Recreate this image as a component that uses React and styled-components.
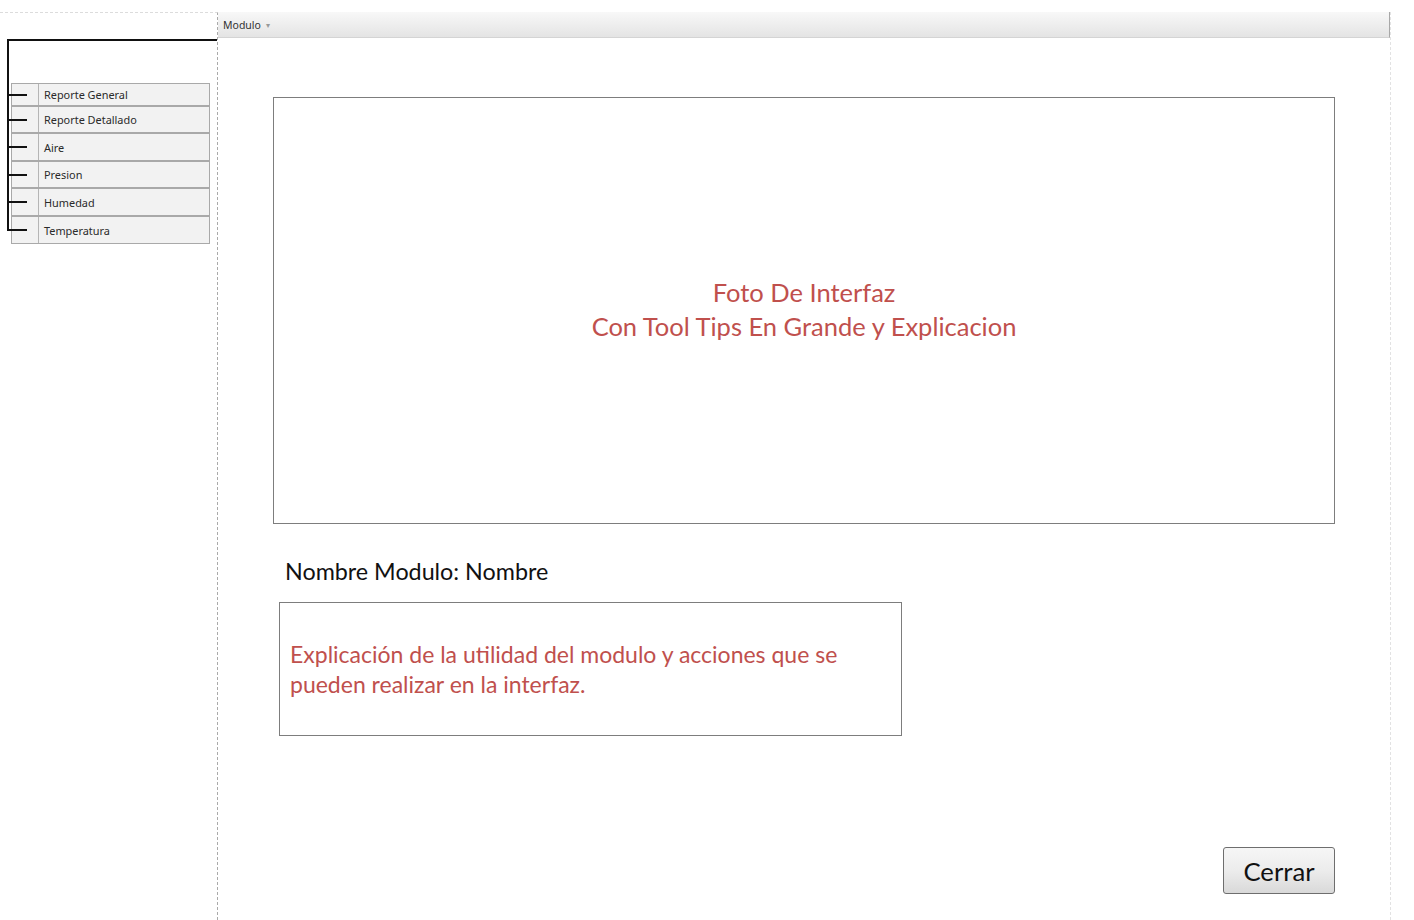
import React from "react";
import styled, { createGlobalStyle } from "styled-components";

const items = [
  { label: "Reporte General", h: 23 },
  { label: "Reporte Detallado", h: 27 },
  { label: "Aire", h: 28 },
  { label: "Presion", h: 27 },
  { label: "Humedad", h: 28 },
  { label: "Temperatura", h: 28 },
];

export default function App() {
  return (
    <>
      <GlobalStyle />
      <Frame>
        <Sidebar>
          <Tree>
            <TreeList>
              {items.map((item) => (
                <TreeRow key={item.label} h={item.h}>
                  <RowIcon />
                  <RowLabel>{item.label}</RowLabel>
                </TreeRow>
              ))}
            </TreeList>
          </Tree>
        </Sidebar>
        <Main>
          <MenuBar>
            <MenuItem>
              Modulo <Caret>▾</Caret>
            </MenuItem>
          </MenuBar>
          <Body>
            <PhotoBox>
              <RedText size={25.5} lh={34}>
                Foto De Interfaz
                <br />
                Con Tool Tips En Grande y Explicacion
              </RedText>
            </PhotoBox>
            <NameLabel>Nombre Modulo: Nombre</NameLabel>
            <DescBox>
              <RedText size={23} lh={30} align="left">
                Explicación de la utilidad del modulo y acciones que se
                <br />
                pueden realizar en la interfaz.
              </RedText>
            </DescBox>
            <CloseButton>Cerrar</CloseButton>
          </Body>
        </Main>
      </Frame>
    </>
  );
}

const GlobalStyle = createGlobalStyle`
  html, body {
    margin: 0;
    padding: 0;
    background: #ffffff;
    font-family: "Lato", "Noto Sans", sans-serif;
  }
`;

const Frame = styled.div`
  display: grid;
  grid-template-columns: 218px 1173px;
  margin-top: 12px;
  min-height: 908px;
`;

const Sidebar = styled.div`
  border-top: 1px dashed #dcdcdc;
  border-right: 1px dashed #aaaaaa;
  box-sizing: border-box;
  padding-top: 26px;
`;

const Tree = styled.div`
  position: relative;
  margin-left: 7px;
  border-top: 2px solid #111;
  padding-top: 42px;
  &::before {
    content: "";
    position: absolute;
    left: 0;
    top: 0;
    bottom: 13px;
    width: 2px;
    background: #111;
  }
`;

const TreeList = styled.div`
  display: flex;
  flex-direction: column;
  margin-left: 4px;
  width: 199px;
`;

const TreeRow = styled.div`
  position: relative;
  display: flex;
  height: ${(p) => p.h}px;
  box-sizing: border-box;
  border: 1px solid #a9a9a9;
  background: #f2f2f2;
  &::before {
    content: "";
    position: absolute;
    left: -4px;
    top: 50%;
    width: 19px;
    height: 2px;
    margin-top: -1px;
    background: #111;
  }
`;

const RowIcon = styled.div`
  width: 26px;
  border-right: 1px solid #b5b5b5;
`;

const RowLabel = styled.div`
  display: flex;
  align-items: center;
  padding-left: 5px;
  font-family: "Noto Sans", "DejaVu Sans", sans-serif;
  font-size: 10.9px;
  color: #2a2a2a;
`;

const Main = styled.div`
  display: flex;
  flex-direction: column;
  border-right: 1px dashed #e2e2e2;
`;

const MenuBar = styled.div`
  height: 26px;
  box-sizing: border-box;
  display: flex;
  align-items: center;
  padding-left: 5px;
  background: linear-gradient(#f8f8f8, #e4e4e4);
  border-bottom: 1px solid #d4d4d4;
  border-right: 1px solid #a8a8a8;
`;

const MenuItem = styled.div`
  font-family: "Noto Sans", "DejaVu Sans", sans-serif;
  font-size: 10.5px;
  color: #333;
  display: flex;
  align-items: center;
  gap: 5px;
`;

const Caret = styled.span`
  font-size: 8px;
  color: #999;
`;

const Body = styled.div`
  display: flex;
  flex-direction: column;
  padding: 59px 55px 0 55px;
`;

const PhotoBox = styled.div`
  height: 427px;
  box-sizing: border-box;
  border: 1.5px solid #7d7d7d;
  padding-bottom: 4px;
  display: flex;
  align-items: center;
  justify-content: center;
`;

const RedText = styled.div`
  color: #c0504d;
  font-size: ${(p) => p.size}px;
  line-height: ${(p) => p.lh}px;
  text-align: ${(p) => p.align || "center"};
`;

const NameLabel = styled.div`
  margin: 34px 0 0 12px;
  font-size: 23.3px;
  line-height: 26px;
  color: #111;
`;

const DescBox = styled.div`
  margin: 18px 0 0 6px;
  width: 623px;
  height: 134px;
  box-sizing: border-box;
  border: 1.5px solid #7d7d7d;
  padding: 36px 0 0 10px;
`;

const CloseButton = styled.button`
  align-self: flex-end;
  margin-top: 111px;
  width: 112px;
  height: 47px;
  border: 1.5px solid #6e6e6e;
  border-radius: 3px;
  background: linear-gradient(#f6f6f6 0%, #ececec 50%, #d9d9d9 100%);
  font-family: "Lato", "Noto Sans", sans-serif;
  font-size: 25.7px;
  color: #111;
  padding: 0;
`;
